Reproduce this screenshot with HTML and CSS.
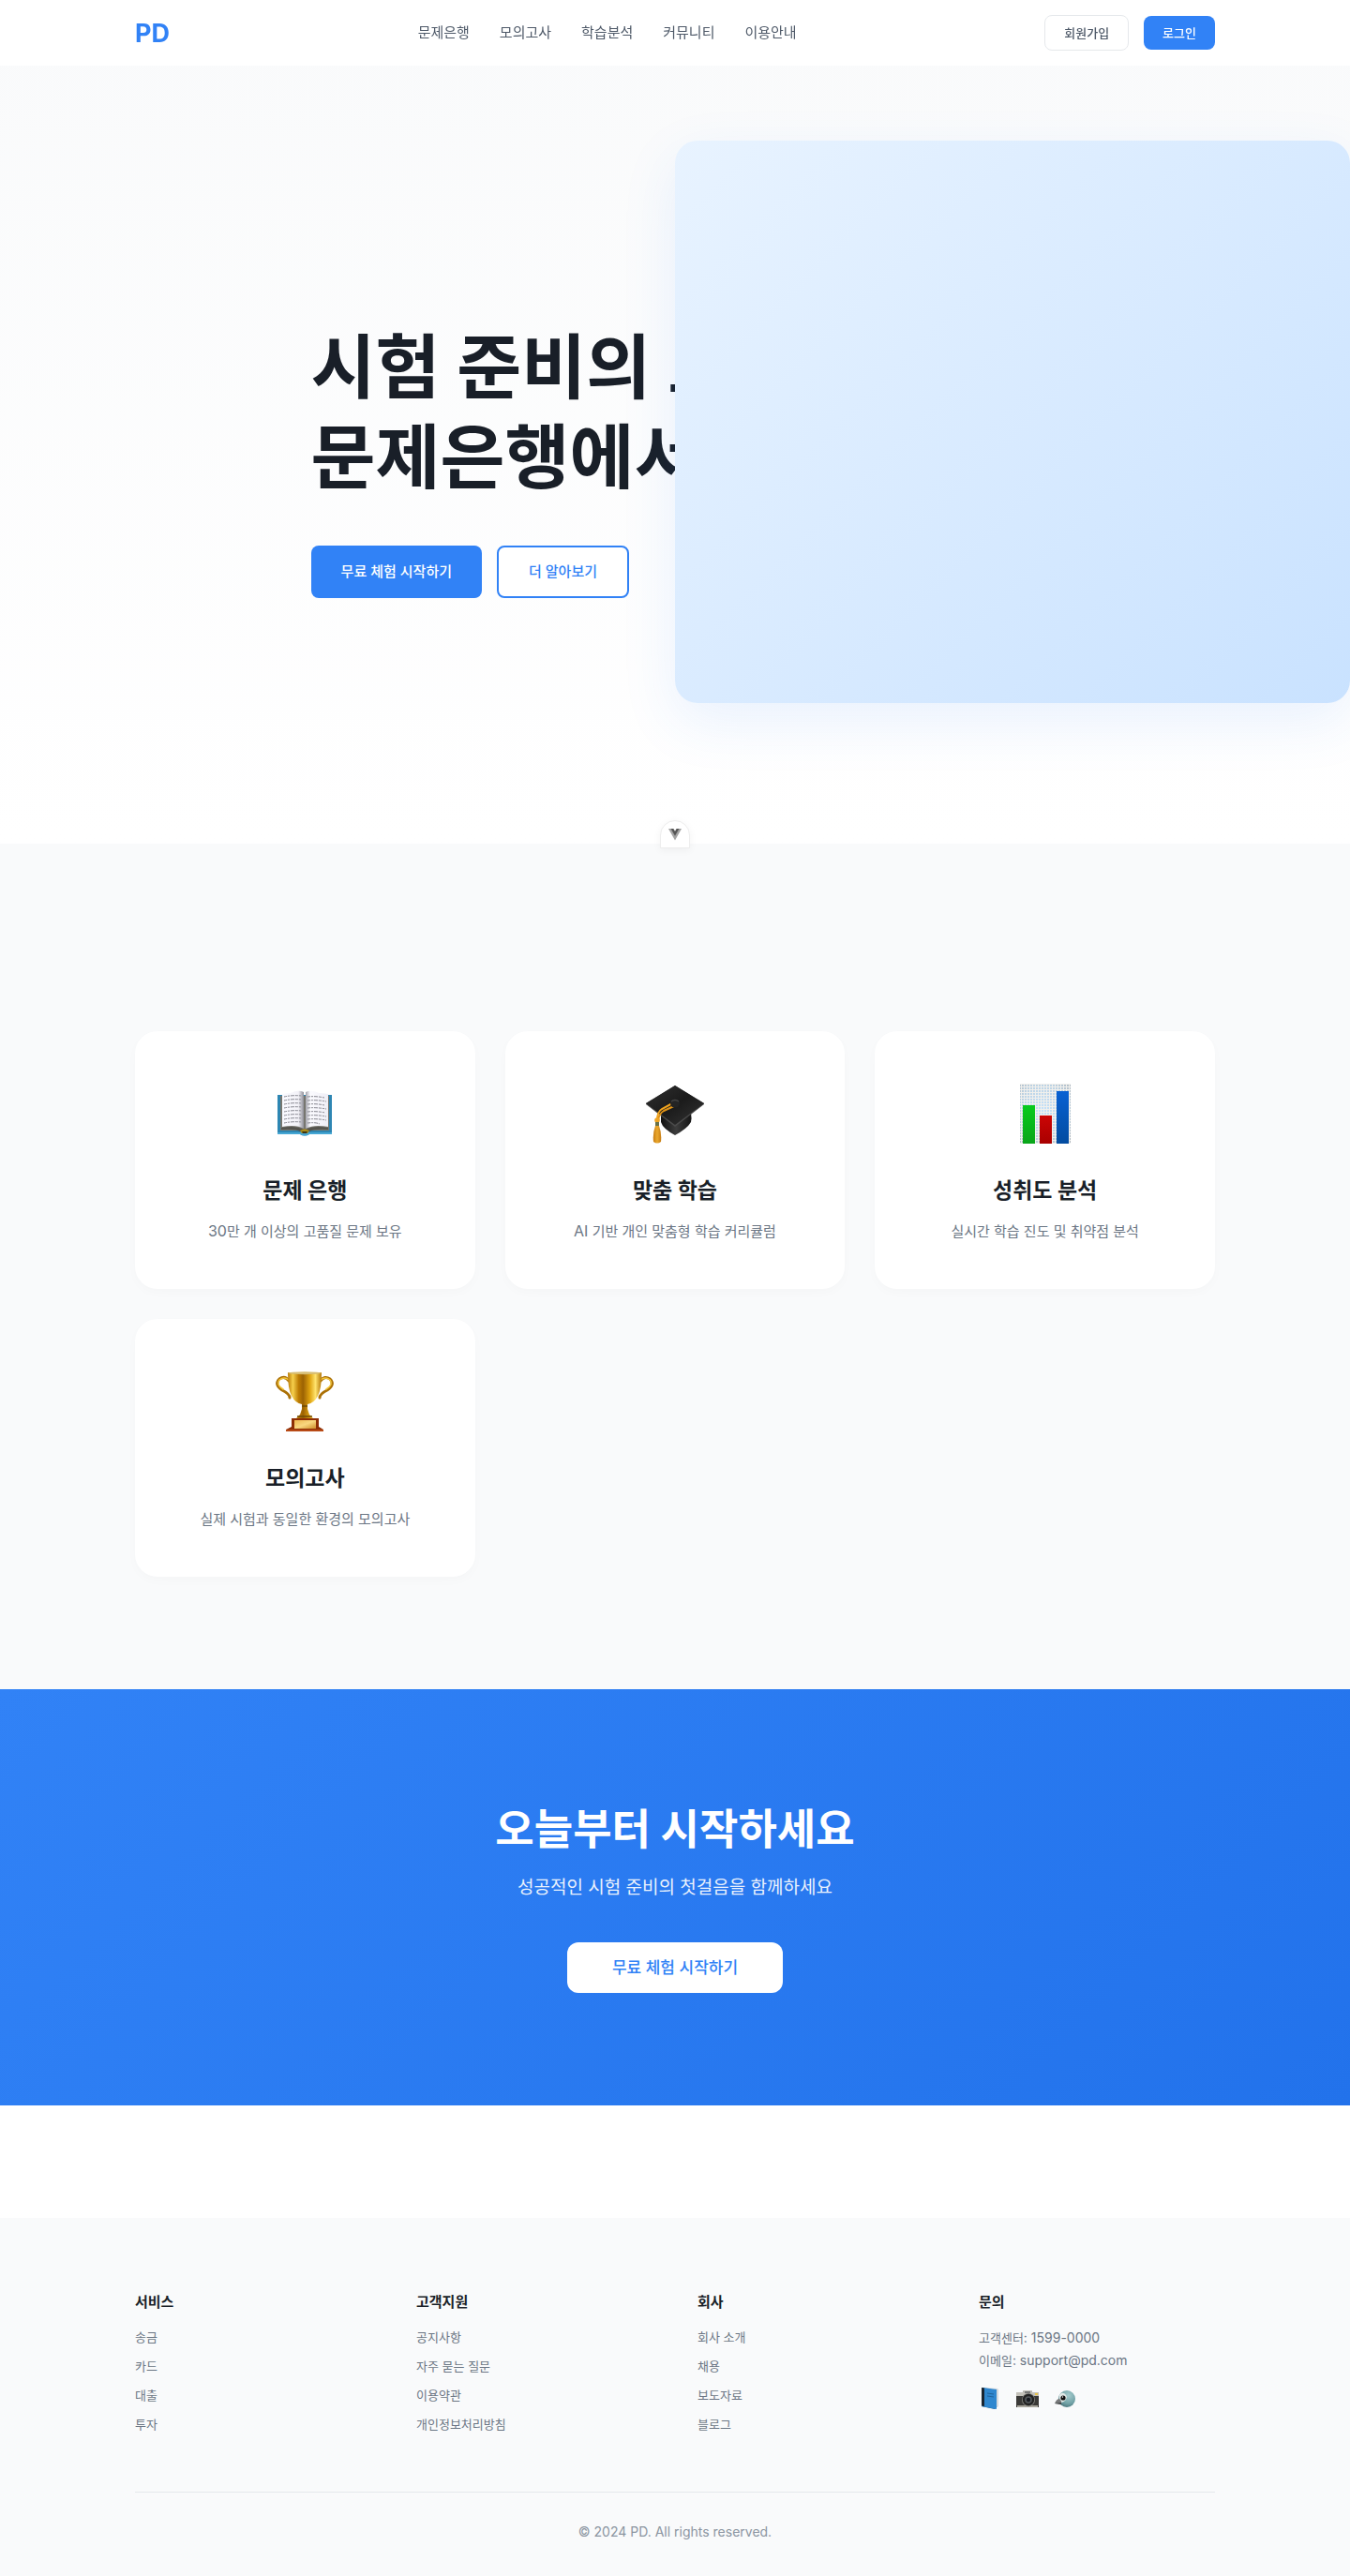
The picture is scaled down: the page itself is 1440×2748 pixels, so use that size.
FILE: index.html
```html
<!DOCTYPE html>
<html lang="ko">
<head>
<meta charset="utf-8">
<meta name="viewport" content="width=device-width, initial-scale=1">
<title>PD</title>
<link rel="stylesheet" href="styles.css">
</head>
<body>
<header class="header">
  <div class="container header-inner">
    <a class="logo" href="#">PD</a>
    <nav class="nav">
      <a href="#">문제은행</a>
      <a href="#">모의고사</a>
      <a href="#">학습분석</a>
      <a href="#">커뮤니티</a>
      <a href="#">이용안내</a>
    </nav>
    <div class="auth">
      <button class="auth-btn auth-outline" type="button">회원가입</button>
      <button class="auth-btn auth-fill" type="button">로그인</button>
    </div>
  </div>
</header>

<main>
  <section class="hero">
    <div class="hero-content">
      <h1>시험 준비의 모든 것<br>문제은행에서 시작하세요</h1>
      <div class="hero-actions">
        <button class="btn btn-primary" type="button">무료 체험 시작하기</button>
        <button class="btn btn-secondary" type="button">더 알아보기</button>
      </div>
    </div>
    <div class="hero-visual"></div>
    <div class="badge">
      <svg width="14" height="13" viewBox="0 0 14 13" aria-hidden="true">
        <path d="M0 0h3.500L7 6l3.500-6H14L7 12.500z" fill="#a3a3a3"/>
        <path d="M2.600 0H5.400L7 2.700 8.600 0h2.800L7 7.800z" fill="#555"/>
      </svg>
    </div>
  </section>

  <section class="features">
    <div class="container feature-grid">
      <article class="card">
        <div class="card-icon">
          <svg width="64" height="64" viewBox="0 0 64 64" aria-hidden="true">
            <defs>
              <linearGradient id="pageL" x1="0" x2="1"><stop offset="0" stop-color="#fafaff"/><stop offset=".75" stop-color="#f3f2f8"/><stop offset="1" stop-color="#8f8f98"/></linearGradient>
              <linearGradient id="pageR" x1="0" x2="1"><stop offset="0" stop-color="#a3a3ac"/><stop offset=".2" stop-color="#fbfbff"/><stop offset="1" stop-color="#efeef6"/></linearGradient>
            </defs>
            <path d="M3 12h58v42H37q-5 3-10 0H3z" fill="#2d86b3"/>
            <path d="M3 52h58v2H37q-5 3-10 0H3z" fill="#46a7d4"/>
            <path d="M6 13h52v37H37l-5 3-5-3H6z" fill="#77766f"/>
            <path d="M7 47q15-3 24 2h2q9-5 24-2v2q-15-1-20 2H27q-5-3-20-2z" fill="#55544e"/>
            <path d="M8 11q5-1 9-1 8-4 14-1v39q-8-5-23-2z" fill="url(#pageL)"/>
            <path d="M33 9q6-3 14 1 4 0 10 1v35q-15-3-24 2z" fill="url(#pageR)"/>
            <g stroke="#85858e" stroke-width="1" stroke-dasharray="3 1 2 1 4 1" fill="none">
              <path d="M10 14q9-2 19-1M10 18q9-2 19-1M10 22q9-2 19-1M10 26q9-2 19-1M10 30q9-2 19-1M10 34q9-2 19-1M10 38q9-2 19-1M10 42q9-2 19-1"/>
              <path d="M35 14q9-1 18 1M35 18q9-1 20 1M35 22q9-1 18 1M35 26q9-1 20 1M35 30q9-1 19 1M35 34q9-1 20 1M35 38q9-1 20 1M35 42q9-1 13 1"/>
            </g>
            <path d="M27 50q5-3 10 0l-2 3h-6z" fill="#aa8c17"/>
            <path d="M29 51h6l-1 2h-4z" fill="#3c3517"/>
          </svg>
        </div>
        <h3>문제 은행</h3>
        <p><span class="latin">30</span>만 개 이상의 고품질 문제 보유</p>
      </article>
      <article class="card">
        <div class="card-icon">
          <svg width="64" height="64" viewBox="0 0 64 64" aria-hidden="true">
            <defs>
              <linearGradient id="capTop" x1="0" y1="0" x2="1" y2="1"><stop offset="0" stop-color="#303030"/><stop offset=".5" stop-color="#1b1b1b"/><stop offset="1" stop-color="#343434"/></linearGradient>
              <linearGradient id="capBase" x1="0" x2="1"><stop offset="0" stop-color="#111"/><stop offset=".5" stop-color="#3c3c3c"/><stop offset="1" stop-color="#151515"/></linearGradient>
              <linearGradient id="tassel" x1="0" x2="1"><stop offset="0" stop-color="#c77b10"/><stop offset=".5" stop-color="#eba92e"/><stop offset="1" stop-color="#c67c12"/></linearGradient>
            </defs>
            <path d="M17 34v7q2 7 15 14 13-7 17-14 1-4 0-10z" fill="url(#capBase)"/>
            <path d="M32 2 63 21v1L32 46 1 22v-1z" fill="#4a4a4a"/>
            <path d="M32 2 63 21 32 44 1 21z" fill="url(#capTop)"/>
            <path d="M31 20 18 27q-5 3-5 12" fill="none" stroke="#f2a51e" stroke-width="2"/>
            <path d="M33 23 20 29q-5 3-6 10" fill="none" stroke="#dd9117" stroke-width="2"/>
            <ellipse cx="32" cy="21" rx="5" ry="4.500" fill="#242424"/>
            <path d="M28 19q4-3 8 0" stroke="#454545" fill="none" stroke-width="1.500"/>
            <circle cx="13" cy="39" r="2.800" fill="#eea425"/>
            <path d="M11 41h4v4h-4z" fill="#687047"/>
            <path d="M11 45h4q3 8 2 17-4 3-8 0-1-9 2-17z" fill="url(#tassel)"/>
          </svg>
        </div>
        <h3>맞춤 학습</h3>
        <p><span class="latin">AI</span> 기반 개인 맞춤형 학습 커리큘럼</p>
      </article>
      <article class="card">
        <div class="card-icon">
          <svg width="64" height="64" viewBox="0 0 64 64" aria-hidden="true">
            <defs>
              <radialGradient id="chartBg" cx=".45" cy=".45" r=".75"><stop offset="0" stop-color="#c4e2fb"/><stop offset=".6" stop-color="#bdd3e4"/><stop offset="1" stop-color="#b0b7bd"/></radialGradient>
              <pattern id="chartGrid" width="3" height="3" patternUnits="userSpaceOnUse"><path d="M0 .5h3M.5 0v3" stroke="#f1f0ed" stroke-width="1"/></pattern>
              <linearGradient id="barG" x2="0" y2="1"><stop stop-color="#08cb1d"/><stop offset="1" stop-color="#0aa51a"/></linearGradient>
              <linearGradient id="barR" x2="0" y2="1"><stop stop-color="#cb0505"/><stop offset="1" stop-color="#a90000"/></linearGradient>
              <linearGradient id="barB" x2="0" y2="1"><stop stop-color="#0861d3"/><stop offset="1" stop-color="#034ca0"/></linearGradient>
            </defs>
            <path d="M5 0h54v64H5z" fill="url(#chartBg)"/>
            <path d="M5 0h54v64H5z" fill="url(#chartGrid)"/>
            <path d="M8 23h13v41H8z" fill="url(#barG)"/>
            <path d="M26 34h13v30H26z" fill="url(#barR)"/>
            <path d="M44 8h13v56H44z" fill="url(#barB)"/>
          </svg>
        </div>
        <h3>성취도 분석</h3>
        <p>실시간 학습 진도 및 취약점 분석</p>
      </article>
      <article class="card">
        <div class="card-icon">
          <svg width="64" height="64" viewBox="0 0 64 64" aria-hidden="true">
            <defs>
              <linearGradient id="gold" x1="0" x2="1"><stop offset="0" stop-color="#b97a05"/><stop offset=".15" stop-color="#f5cf4b"/><stop offset=".32" stop-color="#bd7d04"/><stop offset=".45" stop-color="#9b6203"/><stop offset=".65" stop-color="#dea20f"/><stop offset=".82" stop-color="#ffe36d"/><stop offset="1" stop-color="#b37504"/></linearGradient>
              <linearGradient id="plate" x2="1" y2="1"><stop stop-color="#edb64e"/><stop offset=".5" stop-color="#f8d780"/><stop offset="1" stop-color="#cf8e2a"/></linearGradient>
            </defs>
            <g fill="none" stroke-linecap="round">
              <path d="M15 10Q11 4 5 8-1 14 8 20q8 4 8 8M49 10q4-6 10-2 6 6-3 12-8 4-8 8" stroke="#ab7005" stroke-width="3"/>
              <path d="M15 9Q10 5 5 9 1 14 9 19M49 9q5-4 10 0 4 5-4 10" stroke="#f3c63b" stroke-width="1.500"/>
            </g>
            <path d="M14 1h36q0 18-4 25-4 8-11 9v5l2 6 4 4H23l4-4 2-6v-5q-7-1-11-9-4-7-4-25z" fill="url(#gold)"/>
            <ellipse cx="32" cy="1.800" rx="18" ry="1.500" fill="#d7bd73"/>
            <path d="M29 37h6M24 48h16" stroke="#6f4a04" stroke-width="1.500"/>
            <path d="M18 50h29v9l5 3v2H12v-2l6-3z" fill="#8d2e05"/>
            <path d="M12 62h40v2H12z" fill="#b84a16"/>
            <path d="M21 52h23v9H21z" fill="url(#plate)"/>
          </svg>
        </div>
        <h3>모의고사</h3>
        <p>실제 시험과 동일한 환경의 모의고사</p>
      </article>
    </div>
  </section>

  <section class="cta">
    <h2>오늘부터 시작하세요</h2>
    <p>성공적인 시험 준비의 첫걸음을 함께하세요</p>
    <button class="cta-btn" type="button">무료 체험 시작하기</button>
  </section>
</main>

<footer class="footer">
  <div class="container">
    <div class="footer-grid">
      <div>
        <h4>서비스</h4>
        <ul>
          <li><a href="#">송금</a></li>
          <li><a href="#">카드</a></li>
          <li><a href="#">대출</a></li>
          <li><a href="#">투자</a></li>
        </ul>
      </div>
      <div>
        <h4>고객지원</h4>
        <ul>
          <li><a href="#">공지사항</a></li>
          <li><a href="#">자주 묻는 질문</a></li>
          <li><a href="#">이용약관</a></li>
          <li><a href="#">개인정보처리방침</a></li>
        </ul>
      </div>
      <div>
        <h4>회사</h4>
        <ul>
          <li><a href="#">회사 소개</a></li>
          <li><a href="#">채용</a></li>
          <li><a href="#">보도자료</a></li>
          <li><a href="#">블로그</a></li>
        </ul>
      </div>
      <div class="contact">
        <h4>문의</h4>
        <p>고객센터<span class="latin-sm">: 1599-0000</span></p>
        <p>이메일<span class="latin-sm">: support@pd.com</span></p>
        <div class="social">
          <a href="#" aria-label="블로그">
            <svg width="24" height="24" viewBox="0 0 24 24" aria-hidden="true">
              <path d="M3 1 20 3v18l-3 3L3 21z" fill="#1b5d91"/>
              <path d="M5 1l15 1 1 1v18l-2 1V4z" fill="#d5dade"/>
              <path d="M3 1 19 3v21L3 21z" fill="#2f87cf"/>
              <path d="M3 1l3 .500V21l-3-.500z" fill="#1a2530"/>
              <path d="M9 7l7 1M9 10l7 1" stroke="#1f639c" stroke-width="1"/>
            </svg>
          </a>
          <a href="#" aria-label="사진">
            <svg width="24" height="24" viewBox="0 0 24 24" aria-hidden="true">
              <path d="M0 6h7l1-2h8l1 2h7v16H0z" fill="#3a3937"/>
              <path d="M0 6h7l1-2h8l1 2h7v4H0z" fill="#c3c1b9"/>
              <path d="M9 5h6v2H9z" fill="#777"/>
              <path d="M1 20h22v2H1z" fill="#aaa79d"/>
              <circle cx="13" cy="14" r="7" fill="#84847f"/>
              <circle cx="13" cy="14" r="6.200" fill="#222"/>
              <circle cx="13" cy="14" r="3.800" fill="#55595c"/>
              <circle cx="13" cy="14" r="2.200" fill="#171a20"/>
              <path d="M20 7h3v2h-3z" fill="#e8c34b"/>
            </svg>
          </a>
          <a href="#" aria-label="새 소식">
            <svg width="24" height="24" viewBox="0 0 24 24" aria-hidden="true">
              <defs><radialGradient id="bird" cx=".6" cy=".3" r=".8"><stop stop-color="#a5ccce"/><stop offset=".6" stop-color="#72a2a6"/><stop offset="1" stop-color="#416c72"/></radialGradient></defs>
              <circle cx="14" cy="13" r="9" fill="url(#bird)"/>
              <path d="M8 7q4-1 6 4-1 5-6 6-3-4-2-8z" fill="#e1e9e7"/>
              <circle cx="10" cy="12" r="2.600" fill="#111"/>
              <circle cx="9.500" cy="11" r=".700" fill="#fff"/>
              <path d="M1 18q2-5 5-5 3 2 2 6-4-1-7-1z" fill="#77797a"/>
              <path d="M1 18l7-1v2z" fill="#3c4042"/>
            </svg>
          </a>
        </div>
      </div>
    </div>
    <p class="copyright">© 2024 PD. All rights reserved.</p>
  </div>
</footer>
</body>
</html>
```
FILE: styles.css
```css
* {
  box-sizing: border-box;
  margin: 0;
  padding: 0;
}

body {
  font-family: "Inter", "Noto Sans CJK KR", sans-serif;
  font-size: 15px;
  color: #191f28;
  background: #fff;
}

a {
  color: inherit;
  text-decoration: none;
}

button {
  border: 0;
  font-family: inherit;
  white-space: nowrap;
  cursor: pointer;
}

ul {
  list-style: none;
}

.container {
  width: 100%;
  max-width: 1200px;
  margin: 0 auto;
  padding: 0 24px;
}

.latin {
  font-size: 16px;
  line-height: 1;
}

.latin-sm {
  font-size: 14px;
  line-height: 1;
}

/* Header */
.header {
  position: fixed;
  top: 0;
  left: 0;
  right: 0;
  z-index: 10;
  background: rgba(255, 255, 255, 0.95);
}

.header-inner {
  display: flex;
  align-items: center;
  justify-content: space-between;
  height: 70px;
}

.logo {
  font-size: 27px;
  font-weight: 700;
  color: #3182f6;
}

.nav {
  display: flex;
  gap: 32px;
  line-height: 20px;
  color: #4e5968;
}

.auth {
  display: flex;
  align-items: center;
  gap: 16px;
}

.auth-btn {
  padding: 8px 20px;
  border-radius: 8px;
  font-size: 13px;
  line-height: 20px;
  font-weight: 500;
}

.auth-outline {
  border: 1px solid #e5e8eb;
  background: #fff;
  color: #4e5968;
}

.auth-fill {
  background: #3182f6;
  color: #fff;
}

/* Hero */
.hero {
  position: relative;
  display: flex;
  align-items: center;
  justify-content: center;
  min-height: 900px;
  padding-top: 82px;
  background: linear-gradient(180deg, #f9fafb 0%, #fff 100%);
}

.hero h1 {
  margin-bottom: 46px;
  font-size: 75px;
  line-height: 96px;
  font-weight: 700;
  white-space: nowrap;
}

.hero-actions {
  display: flex;
  gap: 16px;
}

.btn {
  padding: 16px 32px;
  border-radius: 8px;
  font-size: 15px;
  line-height: 24px;
  font-weight: 500;
}

.btn-primary {
  background: #3182f6;
  color: #fff;
}

.btn-secondary {
  padding: 14px 32px;
  border: 2px solid #3182f6;
  background: #fff;
  color: #3182f6;
}

.hero-visual {
  position: absolute;
  top: 150px;
  bottom: 150px;
  right: 0;
  width: 50%;
  border-radius: 24px;
  background: linear-gradient(135deg, #e8f3ff 0%, #c9e2ff 100%);
  box-shadow: 0 20px 60px rgba(49, 130, 246, 0.1);
}

.badge {
  position: absolute;
  bottom: -5px;
  left: 50%;
  z-index: 1;
  display: flex;
  justify-content: center;
  width: 32px;
  height: 30px;
  padding-top: 8px;
  border: 1px solid #ededed;
  border-radius: 16px 16px 0 0;
  background: #fff;
  box-shadow: 0 2px 8px rgba(0, 0, 0, 0.05);
  transform: translateX(-50%);
}

/* Features */
.features {
  padding: 200px 0 120px;
  background: #f9fafb;
}

.feature-grid {
  display: grid;
  grid-template-columns: repeat(auto-fill, minmax(300px, 1fr));
  gap: 32px;
}

.card {
  padding: 48px 32px;
  border-radius: 24px;
  background: #fff;
  box-shadow: 0 4px 12px rgba(0, 0, 0, 0.02);
  text-align: center;
}

.card-icon {
  display: flex;
  align-items: center;
  justify-content: center;
  height: 80px;
  margin-bottom: 24px;
}

.card h3 {
  margin-bottom: 12px;
  font-size: 23px;
  line-height: 37px;
  font-weight: 700;
}

.card p {
  line-height: 26px;
  color: #6b7684;
}

/* Call to action */
.cta {
  padding: 120px 24px;
  background: linear-gradient(135deg, #3182f6 0%, #2272eb 100%);
  color: #fff;
  text-align: center;
}

.cta h2 {
  margin-bottom: 16px;
  font-size: 45px;
  line-height: 60px;
  font-weight: 700;
}

.cta p {
  margin-bottom: 42px;
  font-size: 19px;
  line-height: 32px;
  opacity: 0.9;
}

.cta-btn {
  display: block;
  margin: 0 auto;
  padding: 15px 48px;
  border-radius: 12px;
  background: #fff;
  font-size: 17px;
  line-height: 24px;
  font-weight: 500;
  color: #3182f6;
}

/* Footer */
.footer {
  margin-top: 120px;
  padding: 80px 0 36px;
  background: #f9fafb;
}

.footer-grid {
  display: grid;
  grid-template-columns: repeat(auto-fit, minmax(200px, 1fr));
  gap: 48px;
  margin-bottom: 60px;
  font-size: 13px;
  color: #6b7684;
}

.footer h4 {
  margin-bottom: 16px;
  font-size: 15px;
  line-height: 20px;
  font-weight: 700;
  color: #191f28;
}

.footer ul {
  display: grid;
  gap: 8px;
  line-height: 23px;
}

.contact p {
  line-height: 24px;
}

.social {
  display: flex;
  gap: 16px;
  margin-top: 16px;
}

.social svg {
  display: block;
}

.copyright {
  padding-top: 30px;
  border-top: 1px solid #e5e8eb;
  font-size: 14px;
  line-height: 23px;
  color: #8b95a1;
  text-align: center;
}
```
